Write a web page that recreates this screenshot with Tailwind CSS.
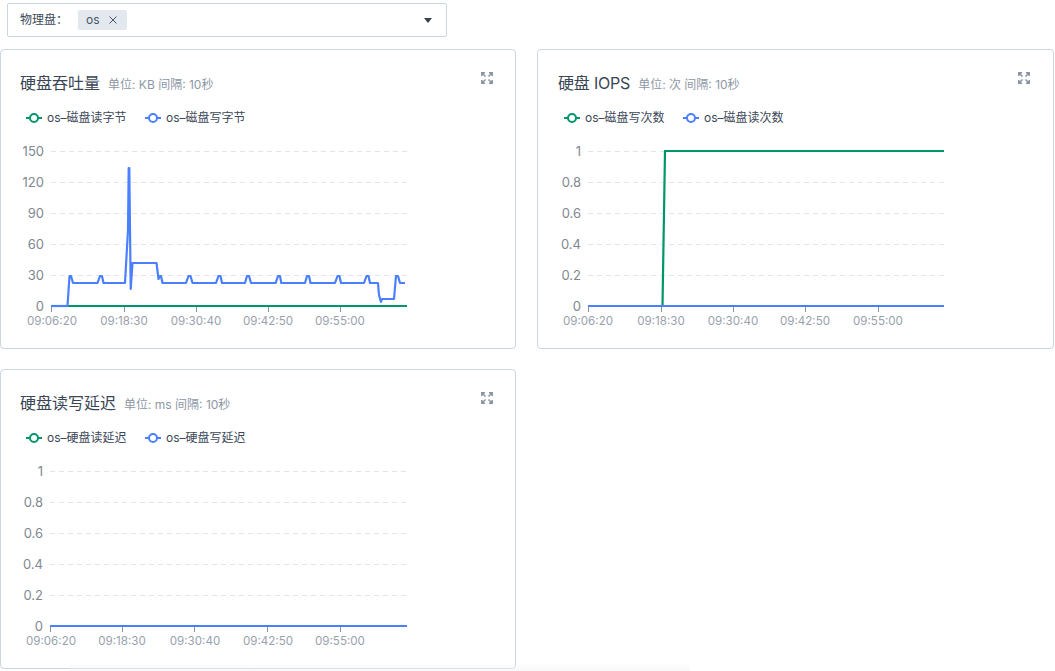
<!DOCTYPE html>
<html lang="zh-CN">
<head>
    <meta charset="UTF-8">
    <title>硬盘监控</title>
    <script src="https://cdn.jsdelivr.net/npm/@tailwindcss/browser@4"></script>
</head>
<body class="bg-white font-['Inter','Noto_Sans_CJK_SC',sans-serif] w-[1055px] h-[671px] overflow-hidden relative">
    <div class="pt-[3px] pl-[7px]">
        <div class="w-[440px] h-[34px] border border-[#ccd6e0] rounded-[2px] flex items-center pl-3 pr-[14px]">
            <span class="text-xs text-[#3c4858] w-[58px]">物理盘：</span>
            <span class="h-5 w-[49px] bg-[#e3e8ee] rounded-[2px] flex items-center pl-2 gap-[9px] text-xs text-[#4a5568]">
                os
                <svg width="8" height="8" viewBox="0 0 8 8" class="stroke-[#4a5568]"><path d="M.5 .5L7.5 7.5M7.5 .5L.5 7.5" fill="none" stroke-width="1"/></svg>
            </span>
            <svg width="8" height="5" viewBox="0 0 8 5" class="ml-auto fill-[#374151]"><path d="M0 0H8L4 5Z"/></svg>
        </div>
    </div>

    <div class="grid grid-cols-[516px_517px] gap-x-[21px] gap-y-[20px] mt-3">
        <!-- 吞吐量 -->
        <section class="relative h-[300px] border border-[#ccd6e0] rounded-[4px] flex flex-col">
            <svg width="12" height="12" viewBox="0 0 12 12" class="absolute top-[22px] left-[480px] stroke-[#8793a3]" fill="none" stroke-width="1.5"><path d="M.8 4V.8H4M.8.8L4.5 4.5M8 .8H11.2V4M11.2.8L7.5 4.5M.8 8V11.2H4M.8 11.2L4.5 7.5M8 11.2H11.2V8M11.2 11.2L7.5 7.5"/></svg>
            <div class="h-[90px] pl-[19px]">
                <div class="flex items-baseline gap-[8px] pt-[21px] h-[50px]">
                    <h2 class="text-base text-[#3a4656]">硬盘吞吐量</h2>
                    <span class="text-xs text-[#8d97a5]">单位: KB 间隔: 10秒</span>
                </div>
                <div class="flex items-center h-4 mt-[10px] text-xs text-[#3c4858] pl-[5px]">
                    <svg width="18" height="12" viewBox="0 0 18 12" class="stroke-[#00966b] mr-[4px]" fill="none" stroke-width="2"><path d="M1 6H17"/><circle cx="9" cy="6" r="4" fill="#fff"/></svg>
                    <span class="w-[97px]">os–磁盘读字节</span>
                    <svg width="18" height="12" viewBox="0 0 18 12" class="stroke-[#4a80ff] mr-[4px]" fill="none" stroke-width="2"><path d="M1 6H17"/><circle cx="9" cy="6" r="4" fill="#fff"/></svg>
                    <span>os–磁盘写字节</span>
                </div>
            </div>
            <svg width="514" height="208" viewBox="1 140 514 208">
                <g stroke="#dfe6ee" stroke-dasharray="5 4">
                    <path d="M51 151.5H407M51 182.5H407M51 213.5H407M51 244.5H407M51 275.5H407"/>
                </g>
                <g fill="#808891" text-anchor="end" class="text-[13px]">
                    <text x="44" y="156">150</text><text x="44" y="187">120</text><text x="44" y="218">90</text><text x="44" y="249">60</text><text x="44" y="280">30</text><text x="44" y="311">0</text>
                </g>
                <path d="M51.5 306V312M124.5 306V312M196.5 306V312M268.5 306V312M340.5 306V312" stroke="#8793a3"/>
                <g fill="#98a1ae" text-anchor="middle" class="text-[11.6px]">
                    <text x="52" y="325">09:06:20</text><text x="124" y="325">09:18:30</text><text x="196" y="325">09:30:40</text><text x="268" y="325">09:42:50</text><text x="340" y="325">09:55:00</text>
                </g>
                <path d="M51 306H407" stroke="#00966b" stroke-width="2.2" fill="none"/>
                <path d="M51.5 306H67.5L69.5 276H71L73 283H97.5L100 276H102L103.5 283H125L128 230L128.7 168H129.3L130.7 289L132.5 263H156.5L158.5 279L160 276H161L162.5 283H186L188.5 276H190.5L192.5 283H216L218.5 276H220.5L222 283H245L247 276H249L251 283H275.7L278 276H280L281.3 283H305L307 276H309L310.5 283H335L337.5 276H339.5L341 283H364L366.5 276H368.5L370 283H378L379 295L381 302L382 299H394L396 276H398L400 283H405" stroke="#4a80ff" stroke-width="2.2" fill="none" stroke-linejoin="round"/>
                <path d="M51.5 306H67" stroke="#4a80ff" stroke-width="2.2"/>
            </svg>
        </section>

        <!-- IOPS -->
        <section class="relative h-[300px] border border-[#ccd6e0] rounded-[4px] flex flex-col">
            <svg width="12" height="12" viewBox="0 0 12 12" class="absolute top-[22px] left-[480px] stroke-[#8793a3]" fill="none" stroke-width="1.5"><path d="M.8 4V.8H4M.8.8L4.5 4.5M8 .8H11.2V4M11.2.8L7.5 4.5M.8 8V11.2H4M.8 11.2L4.5 7.5M8 11.2H11.2V8M11.2 11.2L7.5 7.5"/></svg>
            <div class="h-[90px] pl-5">
                <div class="flex items-baseline gap-[8px] pt-[21px] h-[50px]">
                    <h2 class="text-base text-[#3a4656] tracking-[-0.2px]">硬盘 IOPS</h2>
                    <span class="text-xs text-[#8d97a5]">单位: 次 间隔: 10秒</span>
                </div>
                <div class="flex items-center h-4 mt-[10px] text-xs text-[#3c4858] pl-[5px]">
                    <svg width="18" height="12" viewBox="0 0 18 12" class="stroke-[#00966b] mr-[4px]" fill="none" stroke-width="2"><path d="M1 6H17"/><circle cx="9" cy="6" r="4" fill="#fff"/></svg>
                    <span class="w-[97px]">os–磁盘写次数</span>
                    <svg width="18" height="12" viewBox="0 0 18 12" class="stroke-[#4a80ff] mr-[4px]" fill="none" stroke-width="2"><path d="M1 6H17"/><circle cx="9" cy="6" r="4" fill="#fff"/></svg>
                    <span>os–磁盘读次数</span>
                </div>
            </div>
            <svg width="515" height="208" viewBox="538 140 515 208">
                <g stroke="#dfe6ee" stroke-dasharray="5 4">
                    <path d="M588 151.5H944M588 182.5H944M588 213.5H944M588 244.5H944M588 275.5H944"/>
                </g>
                <g fill="#808891" text-anchor="end" class="text-[13px]">
                    <text x="581" y="156">1</text><text x="581" y="187">0.8</text><text x="581" y="218">0.6</text><text x="581" y="249">0.4</text><text x="581" y="280">0.2</text><text x="581" y="311">0</text>
                </g>
                <path d="M588.5 306V312M661.5 306V312M733.5 306V312M805.5 306V312M878.5 306V312" stroke="#8793a3"/>
                <g fill="#98a1ae" text-anchor="middle" class="text-[11.6px]">
                    <text x="588" y="325">09:06:20</text><text x="661" y="325">09:18:30</text><text x="733" y="325">09:30:40</text><text x="805" y="325">09:42:50</text><text x="878" y="325">09:55:00</text>
                </g>
                <path d="M588 306H662.5L665 151H944" stroke="#00966b" stroke-width="2.2" fill="none"/>
                <path d="M588 306H944" stroke="#4a80ff" stroke-width="2.2" fill="none"/>
            </svg>
        </section>

        <!-- 延迟 -->
        <section class="relative h-[300px] border border-[#ccd6e0] rounded-[4px] flex flex-col">
            <svg width="12" height="12" viewBox="0 0 12 12" class="absolute top-[22px] left-[480px] stroke-[#8793a3]" fill="none" stroke-width="1.5"><path d="M.8 4V.8H4M.8.8L4.5 4.5M8 .8H11.2V4M11.2.8L7.5 4.5M.8 8V11.2H4M.8 11.2L4.5 7.5M8 11.2H11.2V8M11.2 11.2L7.5 7.5"/></svg>
            <div class="h-[90px] pl-[19px]">
                <div class="flex items-baseline gap-[8px] pt-[21px] h-[50px]">
                    <h2 class="text-base text-[#3a4656]">硬盘读写延迟</h2>
                    <span class="text-xs text-[#8d97a5]">单位: ms 间隔: 10秒</span>
                </div>
                <div class="flex items-center h-4 mt-[10px] text-xs text-[#3c4858] pl-[5px]">
                    <svg width="18" height="12" viewBox="0 0 18 12" class="stroke-[#00966b] mr-[4px]" fill="none" stroke-width="2"><path d="M1 6H17"/><circle cx="9" cy="6" r="4" fill="#fff"/></svg>
                    <span class="w-[97px]">os–硬盘读延迟</span>
                    <svg width="18" height="12" viewBox="0 0 18 12" class="stroke-[#4a80ff] mr-[4px]" fill="none" stroke-width="2"><path d="M1 6H17"/><circle cx="9" cy="6" r="4" fill="#fff"/></svg>
                    <span>os–硬盘写延迟</span>
                </div>
            </div>
            <svg width="514" height="208" viewBox="1 460 514 208">
                <g stroke="#dfe6ee" stroke-dasharray="5 4">
                    <path d="M50 471.5H407M50 502.5H407M50 533.5H407M50 564.5H407M50 595.5H407"/>
                </g>
                <g fill="#808891" text-anchor="end" class="text-[13px]">
                    <text x="43" y="476">1</text><text x="43" y="507">0.8</text><text x="43" y="538">0.6</text><text x="43" y="569">0.4</text><text x="43" y="600">0.2</text><text x="43" y="631">0</text>
                </g>
                <path d="M50.5 626V632M122.5 626V632M194.5 626V632M267.5 626V632M340.5 626V632" stroke="#8793a3"/>
                <g fill="#98a1ae" text-anchor="middle" class="text-[11.6px]">
                    <text x="51" y="645">09:06:20</text><text x="122" y="645">09:18:30</text><text x="195" y="645">09:30:40</text><text x="268" y="645">09:42:50</text><text x="340" y="645">09:55:00</text>
                </g>
                <path d="M50 626H407" stroke="#4a80ff" stroke-width="2.2" fill="none"/>
            </svg>
        </section>
    </div>

    <div class="absolute bottom-0 left-[70px] w-[620px] h-2 bg-linear-to-t from-gray-100/60 to-transparent"></div>
</body>
</html>
